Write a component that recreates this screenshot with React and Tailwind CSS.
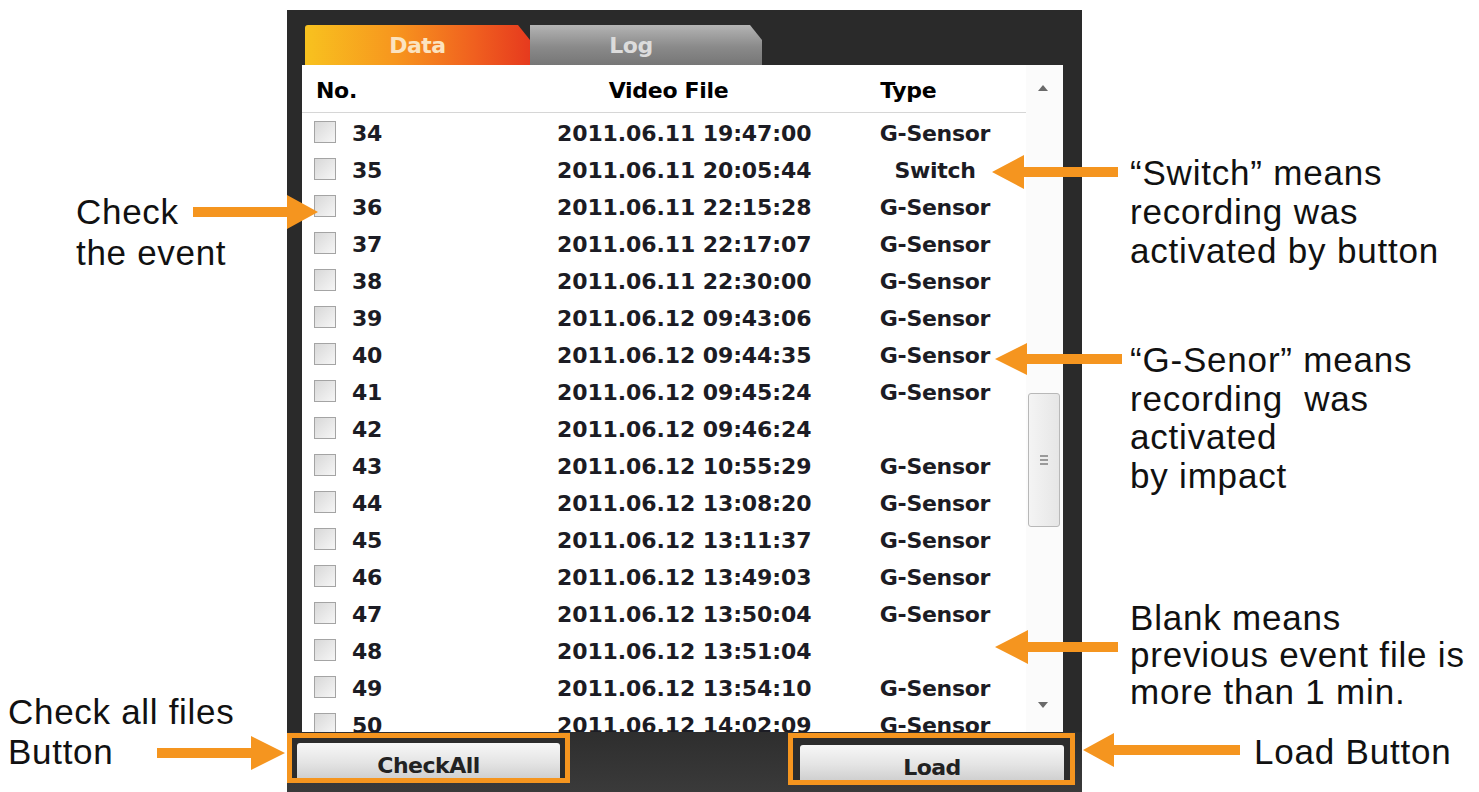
import React from 'react';

const ROWS = [
  { no: 34, file: '2011.06.11 19:47:00', type: 'G-Sensor' },
  { no: 35, file: '2011.06.11 20:05:44', type: 'Switch' },
  { no: 36, file: '2011.06.11 22:15:28', type: 'G-Sensor' },
  { no: 37, file: '2011.06.11 22:17:07', type: 'G-Sensor' },
  { no: 38, file: '2011.06.11 22:30:00', type: 'G-Sensor' },
  { no: 39, file: '2011.06.12 09:43:06', type: 'G-Sensor' },
  { no: 40, file: '2011.06.12 09:44:35', type: 'G-Sensor' },
  { no: 41, file: '2011.06.12 09:45:24', type: 'G-Sensor' },
  { no: 42, file: '2011.06.12 09:46:24', type: '' },
  { no: 43, file: '2011.06.12 10:55:29', type: 'G-Sensor' },
  { no: 44, file: '2011.06.12 13:08:20', type: 'G-Sensor' },
  { no: 45, file: '2011.06.12 13:11:37', type: 'G-Sensor' },
  { no: 46, file: '2011.06.12 13:49:03', type: 'G-Sensor' },
  { no: 47, file: '2011.06.12 13:50:04', type: 'G-Sensor' },
  { no: 48, file: '2011.06.12 13:51:04', type: '' },
  { no: 49, file: '2011.06.12 13:54:10', type: 'G-Sensor' },
  { no: 50, file: '2011.06.12 14:02:09', type: 'G-Sensor' },
];

// arrows of the callouts: tip, tail, y, head length, head half-height
const ARROWS = [
  { tip: 992, tail: 1118, y: 172, hl: 32, hh: 17 },
  { tip: 995, tail: 1122, y: 359, hl: 32, hh: 16 },
  { tip: 995, tail: 1118, y: 647, hl: 33, hh: 17 },
  { tip: 1083, tail: 1240, y: 750, hl: 31, hh: 17 },
  { tip: 318, tail: 193, y: 212, hl: 31, hh: 17 },
  { tip: 285, tail: 157, y: 753, hl: 34, hh: 17 },
];

function arrowPoints({ tip, tail, y, hl, hh }) {
  const d = tail > tip ? 1 : -1;
  const sh = 5;
  const b = tip + d * hl;
  return [
    [tip, y], [b, y - hh], [b, y - sh], [tail, y - sh],
    [tail, y + sh], [b, y + sh], [b, y + hh],
  ].map((p) => p.join(',')).join(' ');
}

function Checkbox() {
  return (
    <div className="w-[22px] h-[22px] -mt-[3px] border border-[#a4a4a4] bg-[linear-gradient(135deg,#d8d8d8,#f6f6f6)] shrink-0" />
  );
}

function Row({ r }) {
  return (
    <div className="flex items-center h-[37px] pt-[3px] shrink-0">
      <div className="w-[255px] flex items-center pl-[12px] gap-[16px]">
        <Checkbox />
        <span>{r.no}</span>
      </div>
      <div className="w-[290px] tracking-[-0.1px]">{r.file}</div>
      <div className="w-[176px] text-center">{r.type}</div>
    </div>
  );
}

function WinButton({ label }) {
  return (
    <div className="h-[44px] rounded-t-[3px] bg-[linear-gradient(to_bottom,#f7f7f7,#e4e4e4_45%,#c4c4c4)] text-center pt-[10px] leading-[26px] text-[22px] font-bold text-[#222] tracking-[-0.5px]">
      {label}
    </div>
  );
}

export default function App() {
  return (
    <div
      className="relative w-[1479px] h-[792px] bg-white overflow-hidden flex text-[#111]"
      style={{ fontFamily: '"Liberation Sans", Arial, sans-serif' }}
    >
      {/* left notes */}
      <div className="w-[287px] shrink-0 text-[35px] tracking-[0.7px]">
        <div className="pt-[191px] pl-[76px] leading-[41px]">
          Check<br />the event
        </div>
        <div className="mt-[419px] pl-[8px] leading-[40px]">
          Check all files<br />Button
        </div>
      </div>

      {/* app panel */}
      <div
        className="w-[795px] h-[782px] mt-[10px] shrink-0 bg-[#2a2a2a] flex flex-col"
        style={{ fontFamily: '"DejaVu Sans", Verdana, sans-serif' }}
      >
        {/* tabs */}
        <div className="h-[55px] pt-[15px] pl-[18px] flex">
          <div className="w-[225px] h-[40px] rounded-tl-[3px] [clip-path:polygon(0_0,213px_0,225px_15px,225px_100%,0_100%)] bg-[linear-gradient(to_right,#f8c21f,#f7961e_40%,#f0601f_75%,#e63a1e)] flex items-center justify-center text-[22px] font-bold text-[#fbe3c0] tracking-[-0.5px]">
            Data
          </div>
          <div className="w-[232px] h-[40px] [clip-path:polygon(0_0,220px_0,232px_15px,232px_100%,0_100%)] bg-[linear-gradient(to_bottom,#b4b4b4,#8a8a8a_55%,#767676)] flex items-center justify-center text-[22px] font-bold text-[#dcdcdc] tracking-[-0.5px] pr-[30px]">
            Log
          </div>
        </div>

        {/* list */}
        <div className="flex h-[667px]">
          <div className="w-[15px] shrink-0" />
          <div className="w-[761px] shrink-0 bg-white flex text-[22px] font-bold text-[#1c1c24] tracking-[-0.3px]">
            <div className="w-[724px] shrink-0 flex flex-col overflow-hidden">
              <div className="h-[48px] pt-[3px] shrink-0 flex items-center border-b border-[#d6d6d6] text-black">
                <div className="w-[255px] pl-[14px]">No.</div>
                <div className="w-[255px] text-center">Video File</div>
                <div className="w-[246px] text-center">Type</div>
              </div>
              {ROWS.map((r) => (
                <Row key={r.no} r={r} />
              ))}
            </div>
            {/* scrollbar */}
            <div className="w-[37px] shrink-0 flex flex-col items-start bg-[#fbfbfb]">
              <div className="ml-[12px] mt-[20px] w-0 h-0 border-l-[5px] border-r-[5px] border-b-[6px] border-l-transparent border-r-transparent border-b-[#6a6a6a]" />
              <div className="ml-[2px] mt-[302px] w-[32px] h-[134px] rounded-[3px] border border-[#b8b8b8] bg-[linear-gradient(to_right,#f4f4f4,#e6e6e6)] flex flex-col items-center justify-center gap-[2px]">
                <div className="w-[8px] h-[2px] bg-[#9a9a9a]" />
                <div className="w-[8px] h-[2px] bg-[#9a9a9a]" />
                <div className="w-[8px] h-[2px] bg-[#9a9a9a]" />
              </div>
              <div className="ml-[12px] mt-[175px] w-0 h-0 border-l-[5px] border-r-[5px] border-t-[6px] border-l-transparent border-r-transparent border-t-[#6a6a6a]" />
            </div>
          </div>
          <div className="w-[19px] shrink-0" />
        </div>

        {/* bottom buttons */}
        <div className="h-[60px] flex items-start pt-[1px] bg-[linear-gradient(to_bottom,#2e2e2e,#3a3a3a)]">
          <div className="w-[283px] h-[50px] border-[5px] border-[#f5951f] bg-[#2c2c2c] px-[5px] pt-[5px] overflow-hidden">
            <WinButton label="CheckAll" />
          </div>
          <div className="w-[218px]" />
          <div className="w-[287px] h-[52px] border-[5px] border-[#f5951f] bg-[#2c2c2c] pl-[7px] pr-[6px] pt-[7px] overflow-hidden">
            <WinButton label="Load" />
          </div>
        </div>
      </div>

      {/* right notes */}
      <div className="flex-1 pl-[48px] text-[35px] tracking-[0.8px] whitespace-nowrap">
        <div className="pt-[153px] leading-[39px]">
          “Switch” means<br />recording was<br />activated by button
        </div>
        <div className="mt-[71px] leading-[38.5px]">
          “G-Senor” means<br />recording{'\u00a0'} was<br />activated<br />by impact
        </div>
        <div className="mt-[104px] leading-[37px]">
          Blank means<br />previous event file is<br />more than 1 min.
        </div>
        <div className="mt-[22px] pl-[124px] leading-[40px]">Load Button</div>
      </div>

      <svg className="absolute inset-0 pointer-events-none" width="1479" height="792">
        {ARROWS.map((a, i) => (
          <polygon key={i} points={arrowPoints(a)} fill="#f5951f" />
        ))}
      </svg>
    </div>
  );
}
